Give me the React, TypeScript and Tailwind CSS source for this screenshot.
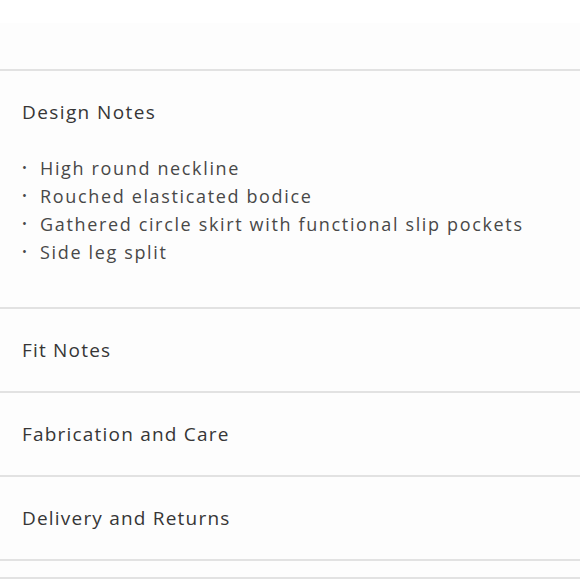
import React from "react";

const font = { fontFamily: '"Open Sans", "Liberation Sans", sans-serif' };

export default function App() {
  const items = [
    "High round neckline",
    "Rouched elasticated bodice",
    "Gathered circle skirt with functional slip pockets",
    "Side leg split",
  ];
  const others = ["Fit Notes", "Fabrication and Care", "Delivery and Returns"];
  return (
    <div className="w-[580px] h-[579px] overflow-hidden bg-[#fdfdfd] text-[#363636]" style={font}>
      <div className="h-[23px] bg-white" />
      <div className="h-[48px] border-b-2 border-[#e2e2e2]" />
      <div className="border-b-2 border-[#e2e2e2] px-[22px] pt-[27px] pb-[41px]">
        <div className="h-[28px] flex items-center text-[19px] tracking-[1.4px]">Design Notes</div>
        <ul className="mt-[28px]">
          {items.map((t) => (
            <li key={t} className="h-[28px] flex items-center text-[18px] tracking-[1.65px] text-[#484848]">
              <span className="w-[18px] text-[13px]">•</span>
              <span>{t}</span>
            </li>
          ))}
        </ul>
      </div>
      {others.map((t) => (
        <div key={t} className="h-[84px] border-b-2 border-[#e2e2e2] px-[22px] flex items-center text-[19px] tracking-[1.2px]">
          {t}
        </div>
      ))}
      <div className="h-[18px] border-b-2 border-[#e2e2e2]" />
    </div>
  );
}
